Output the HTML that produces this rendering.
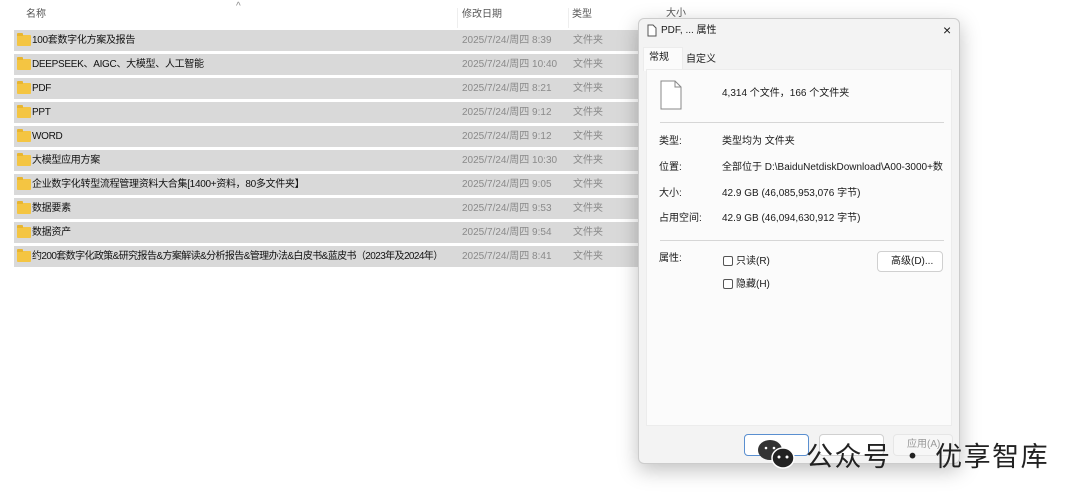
<!DOCTYPE html>
<html><head><meta charset="utf-8"><style>
*{margin:0;padding:0;box-sizing:border-box}
body{width:1080px;height:498px;background:#fff;position:relative;overflow:hidden;font-family:"Liberation Sans","Noto Sans CJK SC",sans-serif;font-size:10px;color:#1a1a1a;line-height:12px}
.h{position:absolute;top:9px;color:#555;font-size:10px}
.row{position:absolute;left:14px;width:626px;height:21px;background:#d9d9d9;line-height:21px;white-space:nowrap}
.row .f{position:absolute;left:3px;top:5px;width:14px;height:11px;background:#f4c542;border-radius:1px}
.row .f:before{content:"";position:absolute;left:0;top:-2px;width:6px;height:3px;background:#e8b530;border-radius:1px 1px 0 0}
.row .n{position:absolute;left:18px;top:0;font-size:10px;color:#111;letter-spacing:-0.3px}
.row .d{position:absolute;left:448px;top:0;color:#8a8a8a}
.row .t{position:absolute;left:559px;top:0;color:#8a8a8a}
.dlg{position:absolute;left:638px;top:18px;width:322px;height:446px;background:#f3f3f3;border:1px solid #ccc;border-radius:6px;box-shadow:0 6px 20px rgba(0,0,0,.25)}
.in{position:absolute;left:7px;top:50px;width:306px;height:357px;background:#fbfbfb;border:1px solid #ececec}
.a{position:absolute;font-size:10px;color:#1a1a1a;white-space:nowrap}
.cb{position:absolute;width:10px;height:10px;border:1px solid #555;border-radius:2px;background:#fff}
.btn{position:absolute;background:#fff;border:1px solid #d0d0d0;border-radius:4px}
</style></head><body>
<div class="h" style="left:26px">名称</div>
<div class="h" style="left:236px;top:1px;color:#888">^</div>
<div class="h" style="left:462px">修改日期</div>
<div class="h" style="left:572px">类型</div>
<div style="position:absolute;left:568px;top:8px;width:1px;height:20px;background:#eee"></div>
<div style="position:absolute;left:457px;top:8px;width:1px;height:20px;background:#eee"></div>

<div class="row" style="top:30px"><i class="f"></i><span class="n">100套数字化方案及报告</span><span class="d">2025/7/24/周四 8:39</span><span class="t">文件夹</span></div>
<div class="row" style="top:54px"><i class="f"></i><span class="n">DEEPSEEK、AIGC、大模型、人工智能</span><span class="d">2025/7/24/周四 10:40</span><span class="t">文件夹</span></div>
<div class="row" style="top:78px"><i class="f"></i><span class="n">PDF</span><span class="d">2025/7/24/周四 8:21</span><span class="t">文件夹</span></div>
<div class="row" style="top:102px"><i class="f"></i><span class="n">PPT</span><span class="d">2025/7/24/周四 9:12</span><span class="t">文件夹</span></div>
<div class="row" style="top:126px"><i class="f"></i><span class="n">WORD</span><span class="d">2025/7/24/周四 9:12</span><span class="t">文件夹</span></div>
<div class="row" style="top:150px"><i class="f"></i><span class="n">大模型应用方案</span><span class="d">2025/7/24/周四 10:30</span><span class="t">文件夹</span></div>
<div class="row" style="top:174px"><i class="f"></i><span class="n">企业数字化转型流程管理资料大合集[1400+资料，80多文件夹】</span><span class="d">2025/7/24/周四 9:05</span><span class="t">文件夹</span></div>
<div class="row" style="top:198px"><i class="f"></i><span class="n">数据要素</span><span class="d">2025/7/24/周四 9:53</span><span class="t">文件夹</span></div>
<div class="row" style="top:222px"><i class="f"></i><span class="n">数据资产</span><span class="d">2025/7/24/周四 9:54</span><span class="t">文件夹</span></div>
<div class="row" style="top:246px"><i class="f"></i><span class="n" style="letter-spacing:-0.6px">约200套数字化政策&amp;研究报告&amp;方案解读&amp;分析报告&amp;管理办法&amp;白皮书&amp;蓝皮书（2023年及2024年）</span><span class="d">2025/7/24/周四 8:41</span><span class="t">文件夹</span></div>
<div class="h" style="left:666px;top:8px;color:#555">大小</div>

<div class="dlg">
<svg style="position:absolute;left:8px;top:5px" width="10" height="13" viewBox="0 0 10 13"><path d="M1 1h5l3 3v8H1z" fill="#fff" stroke="#555"/></svg>
<div class="a" style="left:22px;top:6px">PDF, ... 属性</div>
<div class="a" style="left:304px;top:3px;font-size:14px;line-height:16px">×</div>
<div style="position:absolute;left:4px;top:28px;width:40px;height:24px;background:#fbfbfb;border:1px solid #ececec;border-bottom:none"></div>
<div class="a" style="left:10px;top:33px">常规</div>
<div class="a" style="left:47px;top:35px">自定义</div>
<div class="in">
<svg style="position:absolute;left:13px;top:10px" width="22" height="30" viewBox="0 0 22 30"><path d="M1 1h14l6 6v22H1z" fill="#fff" stroke="#888"/><path d="M15 1v6h6" fill="none" stroke="#888"/></svg>
<div class="a" style="left:75px;top:18px">4,314 个文件，166 个文件夹</div>
<div style="position:absolute;left:13px;top:52px;width:284px;height:1px;background:#d6d6d6"></div>
<div class="a" style="left:12px;top:66px">类型:</div><div class="a" style="left:75px;top:66px">类型均为 文件夹</div>
<div class="a" style="left:12px;top:92px">位置:</div><div class="a" style="left:75px;top:92px">全部位于 D:\BaiduNetdiskDownload\A00-3000+数</div>
<div class="a" style="left:12px;top:118px">大小:</div><div class="a" style="left:75px;top:118px">42.9 GB (46,085,953,076 字节)</div>
<div class="a" style="left:12px;top:143px">占用空间:</div><div class="a" style="left:75px;top:143px">42.9 GB (46,094,630,912 字节)</div>
<div style="position:absolute;left:13px;top:170px;width:284px;height:1px;background:#d6d6d6"></div>
<div class="a" style="left:12px;top:183px">属性:</div>
<div class="cb" style="left:76px;top:186px"></div><div class="a" style="left:89px;top:186px">只读(R)</div>
<div class="cb" style="left:76px;top:209px"></div><div class="a" style="left:89px;top:209px">隐藏(H)</div>
<div class="btn" style="left:230px;top:181px;width:66px;height:21px"></div><div class="a" style="left:244px;top:186px">高级(D)...</div>
</div>
<div class="btn" style="left:105px;top:415px;width:65px;height:22px;border:1px solid #5a8fd0"></div>
<div class="btn" style="left:180px;top:415px;width:65px;height:22px"></div>
<div class="btn" style="left:254px;top:415px;width:60px;height:22px;background:#f7f7f7;border-color:#e6e6e6"></div>
<div class="a" style="left:268px;top:420px;color:#999">应用(A)</div>
</div>
<svg style="position:absolute;left:754px;top:436px" width="46" height="36" viewBox="0 0 46 36"><ellipse cx="16" cy="14" rx="12" ry="10" fill="#333"/><ellipse cx="29" cy="22" rx="11" ry="10" fill="#222" stroke="#fff" stroke-width="1.5"/><circle cx="25" cy="21" r="1.5" fill="#fff"/><circle cx="33" cy="21" r="1.5" fill="#fff"/><circle cx="12" cy="12" r="1.3" fill="#fff"/><circle cx="20" cy="12" r="1.3" fill="#fff"/></svg>
<div style="position:absolute;left:806px;top:436px;font-size:27px;line-height:38px;color:#222;font-family:'Noto Sans CJK SC',sans-serif;white-space:nowrap;letter-spacing:1.5px">公众号 · 优享智库</div>
</body></html>
